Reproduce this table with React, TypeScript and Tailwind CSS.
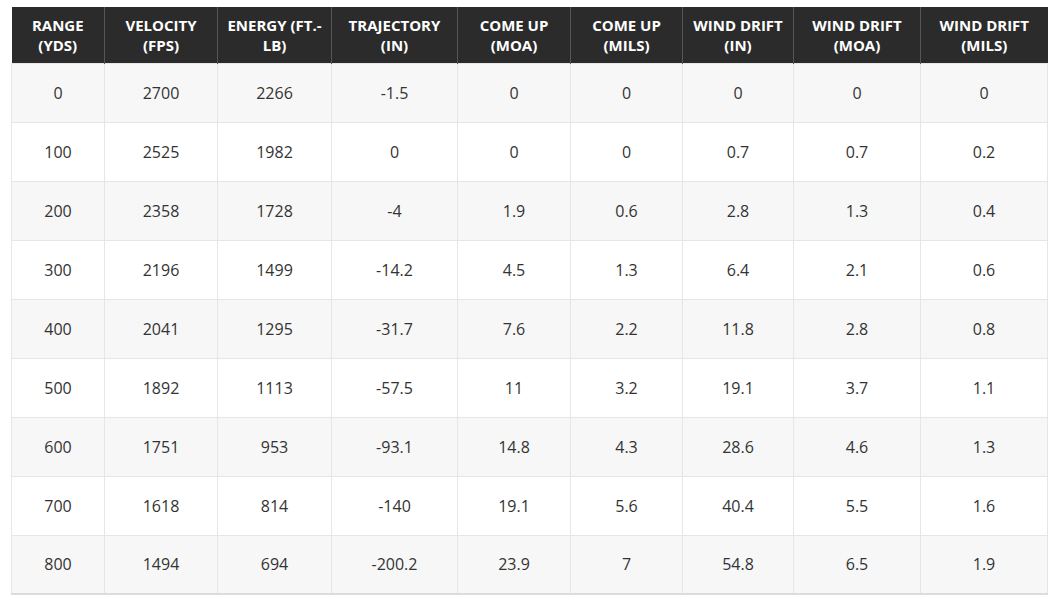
const headers = [
  'RANGE (YDS)',
  'VELOCITY (FPS)',
  'ENERGY (FT.-LB)',
  'TRAJECTORY (IN)',
  'COME UP (MOA)',
  'COME UP (MILS)',
  'WIND DRIFT (IN)',
  'WIND DRIFT (MOA)',
  'WIND DRIFT (MILS)',
];

const widths = ['w-[93px]', 'w-[113px]', 'w-[114px]', 'w-[126px]', 'w-[113px]', 'w-[112px]', 'w-[111px]', 'w-[127px]', 'w-[127px]'];

const rows = [
  ['0', '2700', '2266', '-1.5', '0', '0', '0', '0', '0'],
  ['100', '2525', '1982', '0', '0', '0', '0.7', '0.7', '0.2'],
  ['200', '2358', '1728', '-4', '1.9', '0.6', '2.8', '1.3', '0.4'],
  ['300', '2196', '1499', '-14.2', '4.5', '1.3', '6.4', '2.1', '0.6'],
  ['400', '2041', '1295', '-31.7', '7.6', '2.2', '11.8', '2.8', '0.8'],
  ['500', '1892', '1113', '-57.5', '11', '3.2', '19.1', '3.7', '1.1'],
  ['600', '1751', '953', '-93.1', '14.8', '4.3', '28.6', '4.6', '1.3'],
  ['700', '1618', '814', '-140', '19.1', '5.6', '40.4', '5.5', '1.6'],
  ['800', '1494', '694', '-200.2', '23.9', '7', '54.8', '6.5', '1.9'],
];

export default function App() {
  return (
    <div className="bg-white min-h-[600px] pt-[7px] pl-[11px] font-['Open_Sans',sans-serif]">
      <table className="table-fixed border-collapse w-[1036px] border-b-2 border-[#dcdcdc]">
        <thead>
          <tr className="bg-[#2b2b2b] h-[56px]">
            {headers.map((h, i) => (
              <th
                key={h}
                className={`${widths[i]} px-2 text-center text-[15px] leading-[20px] font-bold text-white border-l border-[#555] first:border-l-0`}
              >
                {h}
              </th>
            ))}
          </tr>
        </thead>
        <tbody>
          {rows.map((r, ri) => (
            <tr key={ri} className={`h-[59px] ${ri % 2 === 0 ? 'bg-[#f7f7f7]' : 'bg-white'}`}>
              {r.map((c, ci) => (
                <td
                  key={ci}
                  className="text-center text-[16px] text-[#333] border border-[#e6e6e6]"
                >
                  {c}
                </td>
              ))}
            </tr>
          ))}
        </tbody>
      </table>
    </div>
  );
}
